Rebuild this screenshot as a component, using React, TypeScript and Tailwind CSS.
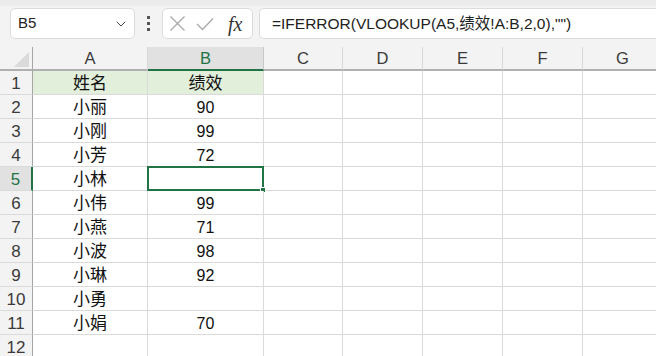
import { ChevronDown } from 'lucide-react';

const cols = ['A', 'B', 'C', 'D', 'E', 'F', 'G'];
const widths = ['w-[115px]', 'w-[116px]', 'w-[79px]', 'w-[80px]', 'w-[80px]', 'w-[80px]', 'w-[80px]'];

const rows: [string, string][] = [
  ['姓名', '绩效'],
  ['小丽', '90'],
  ['小刚', '99'],
  ['小芳', '72'],
  ['小林', ''],
  ['小伟', '99'],
  ['小燕', '71'],
  ['小波', '98'],
  ['小琳', '92'],
  ['小勇', ''],
  ['小娟', '70'],
  ['', ''],
];

const cellFont = { fontFamily: '"Liberation Sans", "Noto Sans CJK SC", sans-serif' };

function TopBar() {
  return (
    <div className="h-[47px] bg-[#f3f3f3] flex items-center relative border-t-[6px] border-[#ebebeb]">
      <div className="ml-[10px] mt-[-6px] w-[125px] h-[31px] bg-white border border-[#dcdcdc] rounded-[5px] flex items-center justify-between pl-[7px] pr-[5px]">
        <span className="text-[15px] text-[#222]" style={cellFont}>B5</span>
        <ChevronDown size={16} strokeWidth={1.5} className="text-[#444]" />
      </div>
      <div className="w-[27px] mt-[-6px] flex flex-col items-center gap-[3px]">
        <div className="w-[3px] h-[3px] bg-[#555]" />
        <div className="w-[3px] h-[3px] bg-[#555]" />
        <div className="w-[3px] h-[3px] bg-[#555]" />
      </div>
      <div className="mt-[-6px] w-[91px] h-[31px] bg-white border border-[#dcdcdc] rounded-[5px] flex items-center pl-[6px]">
        <svg width="17" height="17" viewBox="0 0 17 17" className="mr-[10px]">
          <path d="M1.5 1.5 L15.5 15.5 M15.5 1.5 L1.5 15.5" stroke="#a8a8a8" strokeWidth="1.3" fill="none" />
        </svg>
        <svg width="18" height="14" viewBox="0 0 18 14" className="mr-[14px]">
          <path d="M1 7 L6.5 12.5 L17 1.5" stroke="#a8a8a8" strokeWidth="1.3" fill="none" />
        </svg>
        <span className="text-[20px] italic text-[#333] leading-none" style={{ fontFamily: '"Liberation Serif", serif' }}>fx</span>
      </div>
      <div className="mt-[-6px] ml-[6px] flex-1 h-[31px] bg-white border border-[#dcdcdc] rounded-l-[5px] border-r-0 flex items-center pl-[12px] pt-[1px]">
        <span className="text-[15.5px] text-[#222] whitespace-nowrap" style={cellFont}>=IFERROR(VLOOKUP(A5,绩效!A:B,2,0),"")</span>
      </div>
    </div>
  );
}

function HeaderRow() {
  return (
    <div className="flex h-[24px] bg-[#f3f3f3]">
      <div className="w-[33px] shrink-0 border-r border-b-2 border-[#a6a6a6] border-b-[#b0b0b0] relative">
        <svg width="16" height="15" viewBox="0 0 16 15" className="absolute left-[14px] top-[5px]">
          <polygon points="15,0 15,15 0,15" fill="#dadada" />
        </svg>
      </div>
      {cols.map((c, i) => (
        <div
          key={c}
          className={`${widths[i]} shrink-0 flex items-center justify-center pt-[1px] text-[16.5px] border-r ${
            c === 'B'
              ? 'bg-[#e1e1e1] text-[#217346] border-b-2 border-b-[#217346] border-r-[#c8c8c8]'
              : 'text-[#3a3a3a] border-b-2 border-b-[#b0b0b0] border-r-[#d8d8d8]'
          }`}
          style={cellFont}
        >
          {c}
        </div>
      ))}
    </div>
  );
}

function DataRow({ n, a, b }: { n: number; a: string; b: string }) {
  const selected = n === 5;
  const head = n === 1;
  return (
    <div className="flex h-[24px]">
      <div
        className={`w-[33px] shrink-0 flex items-center justify-center pt-[2px] text-[17px] border-b border-b-[#dadada] ${
          selected ? 'bg-[#e1e1e1] text-[#217346] border-r-2 border-r-[#217346]' : 'bg-[#f3f3f3] text-[#3a3a3a] border-r border-r-[#a6a6a6]'
        }`}
        style={cellFont}
      >
        {n}
      </div>
      <div
        className={`w-[115px] shrink-0 flex items-center justify-center pt-[2px] text-[17px] text-[#111] border-r border-b border-[#dadada] ${
          head ? 'bg-[#e2efda]' : 'bg-white'
        }`}
        style={cellFont}
      >
        {a}
      </div>
      <div
        className={`w-[116px] shrink-0 relative flex items-center justify-center pt-[2px] ${
          head ? 'text-[17px]' : 'text-[16px]'
        } text-[#111] border-r border-b border-[#dadada] ${head ? 'bg-[#e2efda]' : 'bg-white'}`}
        style={cellFont}
      >
        {b}
        {selected && (
          <div className="absolute left-[-1px] top-[-1px] w-[117px] h-[25px] border-2 border-[#217346]">
            <div className="absolute right-[-4px] bottom-[-4px] w-[6px] h-[6px] bg-[#217346] border border-white" />
          </div>
        )}
      </div>
      {widths.slice(2).map((w, i) => (
        <div key={i} className={`${w} shrink-0 bg-white border-r border-b border-[#dadada]`} />
      ))}
    </div>
  );
}

export default function App() {
  return (
    <div className="w-[656px] h-[356px] overflow-hidden bg-white">
      <TopBar />
      <HeaderRow />
      {rows.map((r, i) => (
        <DataRow key={i} n={i + 1} a={r[0]} b={r[1]} />
      ))}
    </div>
  );
}
